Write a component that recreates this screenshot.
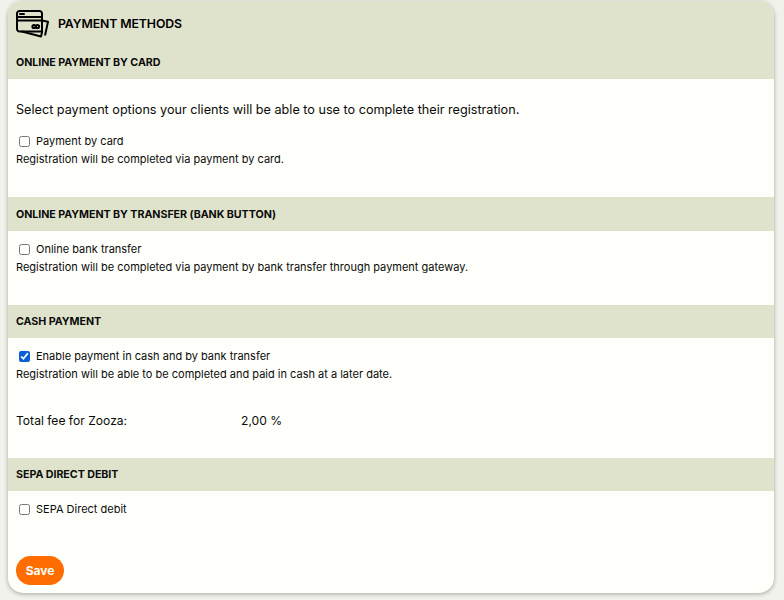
<div class="page">
  <div class="card">
    <header class="title">
      <svg class="icon" viewBox="0 0 34 28" width="34" height="28" fill="none" stroke="#000" stroke-width="2" stroke-linecap="round" stroke-linejoin="round" aria-hidden="true">
        <path d="M5 21.5H3.5A2.5 2.5 0 0 1 1 19V3.5A2.5 2.5 0 0 1 3.5 1h20A2.5 2.5 0 0 1 26 3.5V20a1.5 1.5 0 0 1-1.5 1.5H5z" />
        <path d="M1 7h25M1 10.5h25" />
        <path d="M4 4h4" />
        <path d="M6 21.5l19 5 1.2-5M26 10.5l6 1.2-2.8 13" />
        <circle cx="18" cy="16.5" r="1.6" />
        <circle cx="21.5" cy="16.5" r="1.6" />
      </svg>
      <h1>PAYMENT METHODS</h1>
    </header>

    <h2 class="band">ONLINE PAYMENT BY CARD</h2>
    <section class="body card-pay">
      <p class="lead">Select payment options your clients will be able to use to complete their registration.</p>
      <label class="check"><input type="checkbox" /> Payment by card</label>
      <p class="hint">Registration will be completed via payment by card.</p>
    </section>

    <h2 class="band tall">ONLINE PAYMENT BY TRANSFER (BANK BUTTON)</h2>
    <section class="body bank">
      <label class="check"><input type="checkbox" /> Online bank transfer</label>
      <p class="hint">Registration will be completed via payment by bank transfer through payment gateway.</p>
    </section>

    <h2 class="band">CASH PAYMENT</h2>
    <section class="body cash">
      <label class="check"><input type="checkbox" checked /> Enable payment in cash and by bank transfer</label>
      <p class="hint">Registration will be able to be completed and paid in cash at a later date.</p>
      <div class="fee"><span class="fee-label">Total fee for Zooza:</span><span>2,00 %</span></div>
    </section>

    <h2 class="band">SEPA DIRECT DEBIT</h2>
    <section class="body sepa">
      <label class="check"><input type="checkbox" /> SEPA Direct debit</label>
    </section>

    <div class="actions"><button type="button" class="save">Save</button></div>
  </div>
</div>

<style>
  :global(body) {
    margin: 0;
    background: #f1f2ec;
    font-family: "Inter", "Noto Sans", sans-serif;
    color: #0b0b0b;
  }
  .page {
    height: 600px;
    box-sizing: border-box;
    padding: 1px 10px 7px 8px;
    overflow: hidden;
  }
  .card {
    height: 592px;
    background: #fefffa;
    border-radius: 15px;
    overflow: hidden;
    box-shadow: 0 1px 4px rgba(70, 70, 50, 0.45);
  }
  .title {
    display: flex;
    align-items: center;
    gap: 8px;
    height: 45px;
    padding: 0 8px;
    background: #e0e3cc;
  }
  .icon { flex: none; }
  h1 {
    margin: 0;
    font-size: 12.3px;
    font-weight: 600;
    letter-spacing: -0.1px;
    color: #000;
  }
  .band {
    margin: 0;
    height: 33px;
    padding: 0 8px;
    display: flex;
    align-items: center;
    background: #e0e3cc;
    font-size: 10.7px;
    font-weight: 700;
    letter-spacing: -0.05px;
    color: #0b0b0b;
  }
  .band.tall { height: 34px; }
  .body { padding: 0 8px; box-sizing: border-box; }
  .card-pay { height: 118px; padding-top: 22px; }
  .bank { height: 74px; padding-top: 11px; }
  .cash { height: 120px; padding-top: 11px; }
  .sepa { height: 65px; padding-top: 11px; }
  .lead {
    margin: 0 0 15px;
    font-size: 12.65px;
    line-height: 18px;
  }
  .check {
    display: flex;
    align-items: center;
    gap: 6px;
    height: 15px;
    font-size: 11px;
    line-height: 15px;
  }
  .check input {
    width: 11px;
    height: 11px;
    margin: 0 0 0 3px;
    accent-color: #0b5fd6;
  }
  .hint {
    margin: 3px 0 0;
    font-size: 11px;
    line-height: 15px;
  }
  .fee {
    display: flex;
    margin-top: 30px;
    font-size: 12.1px;
    line-height: 18px;
  }
  .fee-label { width: 225px; }
  .actions { padding: 0 8px; }
  .save {
    width: 48px;
    height: 29px;
    padding: 0;
    border: none;
    border-radius: 15px;
    background: #ff6d00;
    color: #fff;
    font: 700 12px "Inter", sans-serif;
  }
</style>
